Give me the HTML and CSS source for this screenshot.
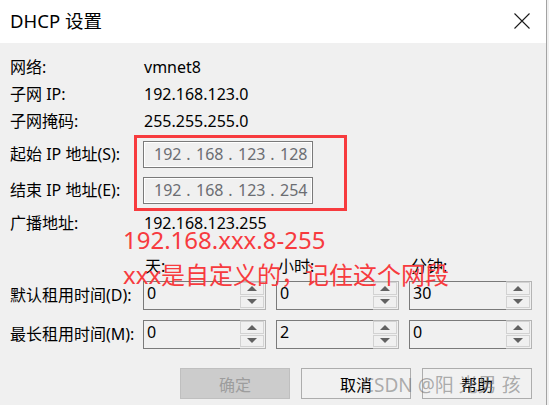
FILE: index.html
```html
<!DOCTYPE html>
<html lang="zh-CN">
<head>
<meta charset="utf-8">
<title>DHCP 设置</title>
<link rel="stylesheet" href="styles.css">
</head>
<body>
<div class="window">
  <header class="titlebar">
    <span class="title">DHCP 设置</span>
    <span class="close" aria-label="关闭">
      <svg width="16" height="16" viewBox="0 0 16 16"><path d="M0.5 0.5 L15.5 15.5 M15.5 0.5 L0.5 15.5" stroke="#1a1a1a" stroke-width="1.1" fill="none"/></svg>
    </span>
  </header>
  <main class="content">
    <div class="row"><span class="label">网络:</span><span class="value">vmnet8</span></div>
    <div class="row"><span class="label">子网 IP:</span><span class="value">192.168.123.0</span></div>
    <div class="row"><span class="label">子网掩码:</span><span class="value">255.255.255.0</span></div>
    <div class="row row-ip first">
      <span class="label">起始 IP 地址(S):</span>
      <div class="ipbox"><span class="seg">192</span><span class="dot">.</span><span class="seg">168</span><span class="dot">.</span><span class="seg">123</span><span class="dot">.</span><span class="seg">128</span></div>
    </div>
    <div class="row row-ip second">
      <span class="label">结束 IP 地址(E):</span>
      <div class="ipbox"><span class="seg">192</span><span class="dot">.</span><span class="seg">168</span><span class="dot">.</span><span class="seg">123</span><span class="dot">.</span><span class="seg">254</span></div>
    </div>
    <div class="row broadcast"><span class="label">广播地址:</span><span class="value">192.168.123.255</span></div>

    <div class="lease-head"><span>天:</span><span>小时:</span><span>分钟:</span></div>
    <div class="row lease">
      <span class="label">默认租用时间(D):</span>
      <div class="spins">
        <div class="spin"><span class="spin-field">0</span><span class="spin-btns"><span class="sb up"></span><span class="sb down"></span></span></div>
        <div class="spin"><span class="spin-field">0</span><span class="spin-btns"><span class="sb up"></span><span class="sb down"></span></span></div>
        <div class="spin"><span class="spin-field">30</span><span class="spin-btns"><span class="sb up"></span><span class="sb down"></span></span></div>
      </div>
    </div>
    <div class="row lease lease2">
      <span class="label">最长租用时间(M):</span>
      <div class="spins">
        <div class="spin"><span class="spin-field">0</span><span class="spin-btns"><span class="sb up"></span><span class="sb down"></span></span></div>
        <div class="spin"><span class="spin-field">2</span><span class="spin-btns"><span class="sb up"></span><span class="sb down"></span></span></div>
        <div class="spin"><span class="spin-field">0</span><span class="spin-btns"><span class="sb up"></span><span class="sb down"></span></span></div>
      </div>
    </div>

    <div class="buttons">
      <span class="btn disabled">确定</span>
      <span class="btn">取消</span>
      <span class="btn">帮助</span>
    </div>
  </main>

  <div class="highlight"></div>
  <div class="note">192.168.xxx.8-255<br>xxx是自定义的，记住这个网段</div>
  <div class="watermark">CSDN @阳 光男 孩</div>
</div>
</body>
</html>
```

FILE: styles.css
```css
* { box-sizing: border-box; }

html, body {
  margin: 0;
  padding: 0;
  background: #f0f0f0;
}

body {
  width: 549px;
  height: 405px;
  overflow: hidden;
  font-family: "Noto Sans", "Noto Sans CJK SC", sans-serif;
  font-size: 16px;
  color: #000;
}

.window {
  position: relative;
  width: 547px;
  height: 405px;
  border-right: 1px solid #a3a3a3;
  background: #f0f0f0;
}

.titlebar {
  height: 43px;
  background: #fff;
  display: flex;
  align-items: center;
  justify-content: space-between;
  padding: 0 16px 2px 10px;
}

.title {
  font-size: 18.5px;
  line-height: 24px;
  color: #000;
}

.close {
  display: flex;
  width: 16px;
  height: 16px;
}

.content {
  padding: 11px 0 0 10px;
  display: flex;
  flex-direction: column;
}

.row {
  display: flex;
  align-items: center;
  height: 27px;
  line-height: 27px;
}

.label {
  width: 133px;
  flex: none;
  white-space: nowrap;
}

.value {
  padding-left: 1px;
}

.row-ip.first { margin-top: 6px; }
.row-ip.second { margin-top: 9px; }
.broadcast { margin-top: 6px; }

.ipbox {
  width: 170px;
  height: 27px;
  border: 1px solid #7a7a7a;
  box-shadow: inset 0 0 0 1px #fff;
  display: flex;
  align-items: center;
  padding-left: 10px;
  color: #6b6d72;
  line-height: 25px;
}

.seg {
  width: 27px;
  text-align: center;
}

.dot {
  width: 15px;
  text-align: center;
}

.lease-head {
  margin-top: 17px;
  height: 24px;
  line-height: 24px;
  display: flex;
  padding-left: 135px;
}

.lease-head span {
  width: 133px;
}

.lease {
  margin-top: 3px;
  height: 29px;
}

.lease2 { margin-top: 10px; }

.spins {
  display: flex;
  gap: 10px;
}

.spin {
  width: 123px;
  height: 29px;
  display: flex;
}

.spin-field {
  flex: 1;
  border: 1px solid #7a7a7a;
  border-right: none;
  padding-left: 3px;
  line-height: 22px;
}

.spin-btns {
  width: 26px;
  border: 1px solid #b4b4b4;
  border-left: none;
  display: flex;
  flex-direction: column;
  gap: 1px;
  padding: 0 1px 1px 0;
}

.sb {
  flex: 1;
  border: 1px solid #d2d2d2;
  display: flex;
  align-items: center;
  justify-content: center;
}

.sb::before {
  content: "";
  width: 0;
  height: 0;
  border-left: 5px solid transparent;
  border-right: 5px solid transparent;
}

.sb.up::before { border-bottom: 5px solid #616161; }
.sb.down::before { border-top: 5px solid #616161; }

.buttons {
  margin-top: 19px;
  display: flex;
  justify-content: flex-end;
  gap: 11px;
  padding-right: 14px;
}

.btn {
  width: 110px;
  height: 31px;
  border: 1px solid #adadad;
  background: #f1f1f1;
  display: flex;
  align-items: center;
  justify-content: center;
  color: #000;
}

.btn.disabled {
  background: #cccccc;
  border-color: #bfbfbf;
  color: #9d9d9d;
}

.highlight {
  position: absolute;
  left: 134px;
  top: 135px;
  width: 213px;
  height: 76px;
  border: 3px solid #f73b3e;
}

.note {
  position: absolute;
  left: 123px;
  top: 222px;
  font-size: 24px;
  line-height: 35px;
  color: #f73b3e;
  white-space: nowrap;
}

.watermark {
  position: absolute;
  left: 362px;
  top: 373px;
  font-size: 19px;
  line-height: 24px;
  color: rgba(110, 110, 110, 0.55);
  white-space: nowrap;
}
```
